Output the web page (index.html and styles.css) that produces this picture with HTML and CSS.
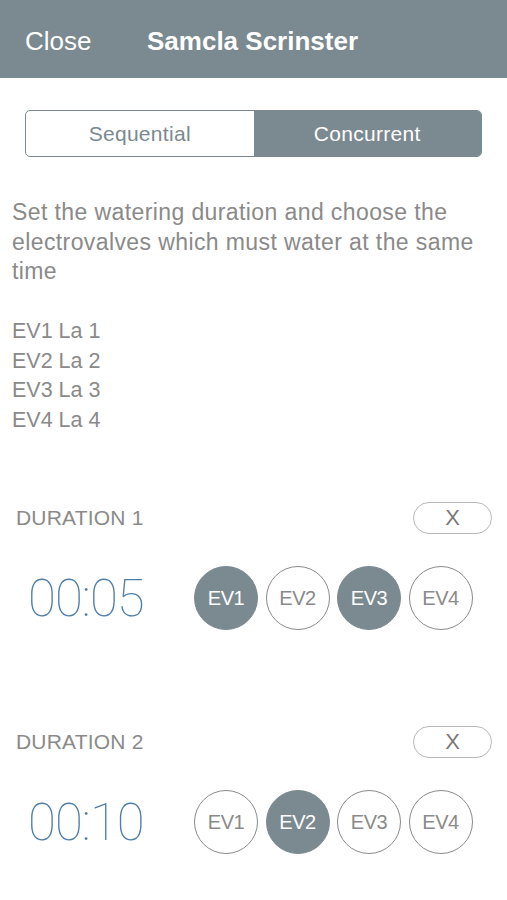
FILE: index.html
```html
<!DOCTYPE html>
<html lang="en">
<head>
  <meta charset="UTF-8">
  <meta name="viewport" content="width=device-width, initial-scale=1.0">
  <title>Samcla Scrinster</title>
  <link rel="stylesheet" href="styles.css">
</head>
<body>
  <header class="topbar">
    <span class="close">Close</span>
    <span class="title">Samcla Scrinster</span>
  </header>

  <div class="segmented">
    <div class="seg">Sequential</div>
    <div class="seg active">Concurrent</div>
  </div>

  <p class="intro">Set the watering duration and choose the electrovalves which must water at the same time</p>

  <ul class="valves">
    <li>EV1 La 1</li>
    <li>EV2 La 2</li>
    <li>EV3 La 3</li>
    <li>EV4 La 4</li>
  </ul>

  <div class="duration">
    <div class="duration-head">
      <span class="label">DURATION 1</span>
      <button class="remove">X</button>
    </div>
    <div class="duration-row">
      <div class="time">00:05</div>
      <div class="circles">
        <span class="ev on">EV1</span>
        <span class="ev">EV2</span>
        <span class="ev on">EV3</span>
        <span class="ev">EV4</span>
      </div>
    </div>
  </div>

  <div class="duration">
    <div class="duration-head">
      <span class="label">DURATION 2</span>
      <button class="remove">X</button>
    </div>
    <div class="duration-row">
      <div class="time">00:10</div>
      <div class="circles">
        <span class="ev">EV1</span>
        <span class="ev on">EV2</span>
        <span class="ev">EV3</span>
        <span class="ev">EV4</span>
      </div>
    </div>
  </div>
</body>
</html>
```
FILE: styles.css
```css
body {
  margin: 0;
  font-family: "Liberation Sans", Arial, sans-serif;
  color: #8a8a8a;
  background: #fff;
}
.topbar {
  height: 78px;
  background-color: #7b8990;
  color: #fff;
  display: flex;
  align-items: center;
  padding: 4px 0 0 25px;
  box-sizing: border-box;
  font-size: 26px;
}
.close {
  width: 122px;
}
.title {
  font-weight: bold;
}
.segmented {
  display: flex;
  margin: 32px 25px 0 25px;
  height: 47px;
  border: 1.5px solid #7b8990;
  border-radius: 5px;
  overflow: hidden;
  box-sizing: border-box;
}
.seg {
  flex: 1;
  display: flex;
  align-items: center;
  justify-content: center;
  font-size: 21px;
  letter-spacing: 0.3px;
  color: #7b8990;
}
.seg.active {
  background-color: #7b8990;
  color: #fff;
}
.intro {
  margin: 41px 12px 0 12px;
  font-size: 23px;
  letter-spacing: 0.4px;
  line-height: 29.5px;
}
.valves {
  list-style: none;
  margin: 30.5px 12px 0 12px;
  padding: 0;
  font-size: 21.5px;
  line-height: 29.5px;
}
.duration {
  margin-top: 67px;
}
.duration + .duration {
  margin-top: 96px;
}
.duration-head {
  display: flex;
  justify-content: space-between;
  align-items: center;
  padding: 0 15px 0 16px;
}
.label {
  font-size: 21px;
  letter-spacing: 0.2px;
}
.remove {
  width: 79px;
  height: 32px;
  border: 1.5px solid #b8b8b8;
  border-radius: 16px;
  background: #fff;
  color: #7a7a7a;
  font-family: inherit;
  font-size: 22px;
  padding: 0;
}
.duration-row {
  display: flex;
  align-items: center;
  margin-top: 32px;
  padding-left: 28px;
}
.time {
  width: 166px;
  font-family: Roboto, sans-serif;
  font-weight: 100;
  font-size: 51px;
  letter-spacing: -1px;
  color: #4f7ea6;
}
.circles {
  display: flex;
  gap: 7.5px;
}
.ev {
  width: 64px;
  height: 64px;
  box-sizing: border-box;
  border: 1.5px solid #8a8a8a;
  border-radius: 50%;
  display: flex;
  align-items: center;
  justify-content: center;
  font-size: 20px;
  letter-spacing: -0.5px;
  color: #8a8a8a;
}
.ev.on {
  background-color: #7b8990;
  border-color: #7b8990;
  color: #fff;
}
```
